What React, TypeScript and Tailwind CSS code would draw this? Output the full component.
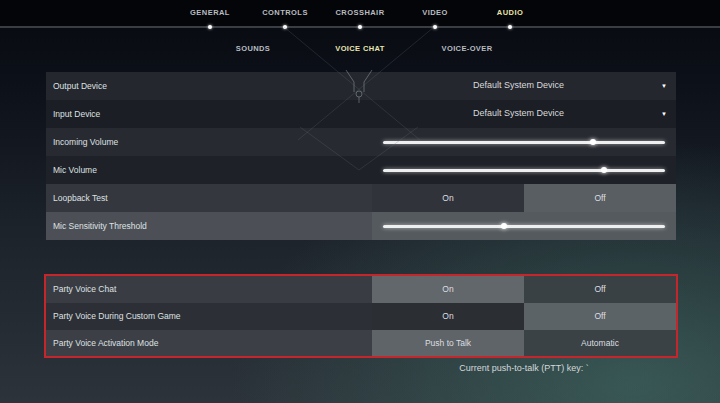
import React from 'react';

const font = { fontFamily: '"Liberation Sans", Arial, sans-serif' };

const tabs = ['GENERAL', 'CONTROLS', 'CROSSHAIR', 'VIDEO', 'AUDIO'];
const subTabs = ['SOUNDS', 'VOICE CHAT', 'VOICE-OVER'];

const Slider = ({ pos }: { pos: number }) => (
  <div className="flex-1 h-full flex items-center px-[11px]">
    <div className="relative w-full h-[3px] rounded-full bg-[#eef0f0] shadow-[0_0_4px_rgba(255,255,255,0.6)]">
      <div
        className="absolute top-1/2 -translate-y-1/2 -translate-x-1/2 w-[6px] h-[6px] rounded-full bg-white shadow-[0_0_4px_rgba(255,255,255,0.9)]"
        style={{ left: `${pos}%` }}
      />
    </div>
  </div>
);

const Dropdown = ({ value }: { value: string }) => (
  <div className="flex-1 h-full flex items-center">
    <span className="flex-1 text-center pl-[4px] text-[9px] text-[#d9dbdd]">{value}</span>
    <span className="w-[8px] mr-[7px] text-[6px] text-white leading-none">&#9660;</span>
  </div>
);

const Toggle = ({ options, active, light = '#5b6064', dark = '#30343a' }: { options: string[]; active: number; light?: string; dark?: string }) => (
  <div className="flex-1 h-full flex">
    {options.map((o, i) => (
      <div
        key={o}
        className="flex-1 h-full flex items-center justify-center text-[8.5px] text-[#dcdee0]"
        style={{ backgroundColor: i === active ? light : dark }}
      >
        {o}
      </div>
    ))}
  </div>
);

const Row = ({ label, bg, h = 'h-[28px]', children }: { label: string; bg: string; h?: string; children: React.ReactNode }) => (
  <div className={`flex ${h}`} style={{ backgroundColor: bg }}>
    <div className="w-[326px] flex items-center pl-[7px] text-[8.5px] text-[#dfe1e3]">{label}</div>
    <div className="w-[304px] h-full flex">{children}</div>
  </div>
);

export default function App() {
  return (
    <div
      className="relative w-[720px] h-[403px] overflow-hidden bg-[radial-gradient(ellipse_at_88%_95%,rgba(70,125,112,0.5),transparent_45%),linear-gradient(180deg,#07090f_0%,#0c1018_20%,#1c222a_55%,#2c333a_100%)]"
      style={font}
    >
      {/* top nav */}
      <div className="h-[26px] bg-[#040508] flex justify-center items-center">
        {tabs.map((t) => (
          <div
            key={t}
            className={`w-[75px] text-center text-[7.5px] font-bold tracking-[0.06em] ${t === 'AUDIO' ? 'text-[#e6e3a8]' : 'text-[#b9bcc1]'}`}
          >
            {t}
          </div>
        ))}
      </div>
      <div className="h-[2px] bg-[#3a3d44] flex justify-center">
        {tabs.map((t) => (
          <div key={t} className="w-[75px] flex justify-center">
            <div className="w-[4px] h-[4px] -mt-[1px] rounded-full bg-white shadow-[0_0_3px_rgba(255,255,255,0.9)]" />
          </div>
        ))}
      </div>

      {/* sub tabs */}
      <div className="h-[44px] flex justify-center pt-[16px]">
        {subTabs.map((t) => (
          <div
            key={t}
            className={`w-[107px] text-center text-[7.5px] font-bold tracking-[0.05em] leading-[10px] ${t === 'VOICE CHAT' ? 'text-[#e8e6b4]' : 'text-[#b9bcc1]'}`}
          >
            {t}
          </div>
        ))}
      </div>

      {/* settings */}
      <div className="ml-[46px] w-[630px] flex flex-col">
        <Row label="Output Device" bg="#24272e">
          <Dropdown value="Default System Device" />
        </Row>
        <Row label="Input Device" bg="#1b1e24">
          <Dropdown value="Default System Device" />
        </Row>
        <Row label="Incoming Volume" bg="#272a31">
          <Slider pos={74.5} />
        </Row>
        <Row label="Mic Volume" bg="#1e2127">
          <Slider pos={78.5} />
        </Row>
        <Row label="Loopback Test" bg="#34373d">
          <Toggle options={['On', 'Off']} active={1} light="#595e62" dark="#30343a" />
        </Row>
        <Row label="Mic Sensitivity Threshold" bg="#4c5056">
          <div className="flex-1 h-full flex bg-[#555a5e]">
            <Slider pos={43} />
          </div>
        </Row>
      </div>

      <div className="ml-[44px] mt-[34px] w-[634px] border-2 border-[#c4262b] flex flex-col">
        <Row label="Party Voice Chat" bg="#393d43" h="h-[27px]">
          <Toggle options={['On', 'Off']} active={0} light="#62676b" dark="#3a4145" />
        </Row>
        <Row label="Party Voice During Custom Game" bg="#2c2f35" h="h-[27px]">
          <Toggle options={['On', 'Off']} active={1} light="#5c6367" dark="#2b2e33" />
        </Row>
        <Row label="Party Voice Activation Mode" bg="#3c4046" h="h-[26px]">
          <Toggle options={['Push to Talk', 'Automatic']} active={0} light="#5f6468" dark="#3a4246" />
        </Row>
      </div>

      <div className="ml-[372px] w-[304px] mt-[4px] text-center text-[9px] text-[#d5d8da]">
        Current push-to-talk (PTT) key: `
      </div>

      {/* decorative lines over the panel */}
      <svg className="absolute left-0 top-0 pointer-events-none" width="720" height="403">
        <g stroke="#6a707a" strokeOpacity="0.3" strokeWidth="0.8" fill="none">
          <line x1="284" y1="27" x2="420" y2="140" />
          <line x1="434" y1="27" x2="298" y2="140" />
          <line x1="300" y1="127" x2="359" y2="170" />
          <line x1="418" y1="127" x2="359" y2="170" />
        </g>
        <g stroke="#8a9098" strokeOpacity="0.65" strokeWidth="0.9" fill="none">
          <path d="M346 70 L354 82 L354 92 M372 70 L364 82 L364 92" />
          <circle cx="359" cy="94" r="3" />
          <line x1="359" y1="97" x2="359" y2="103" />
        </g>
      </svg>
    </div>
  );
}
